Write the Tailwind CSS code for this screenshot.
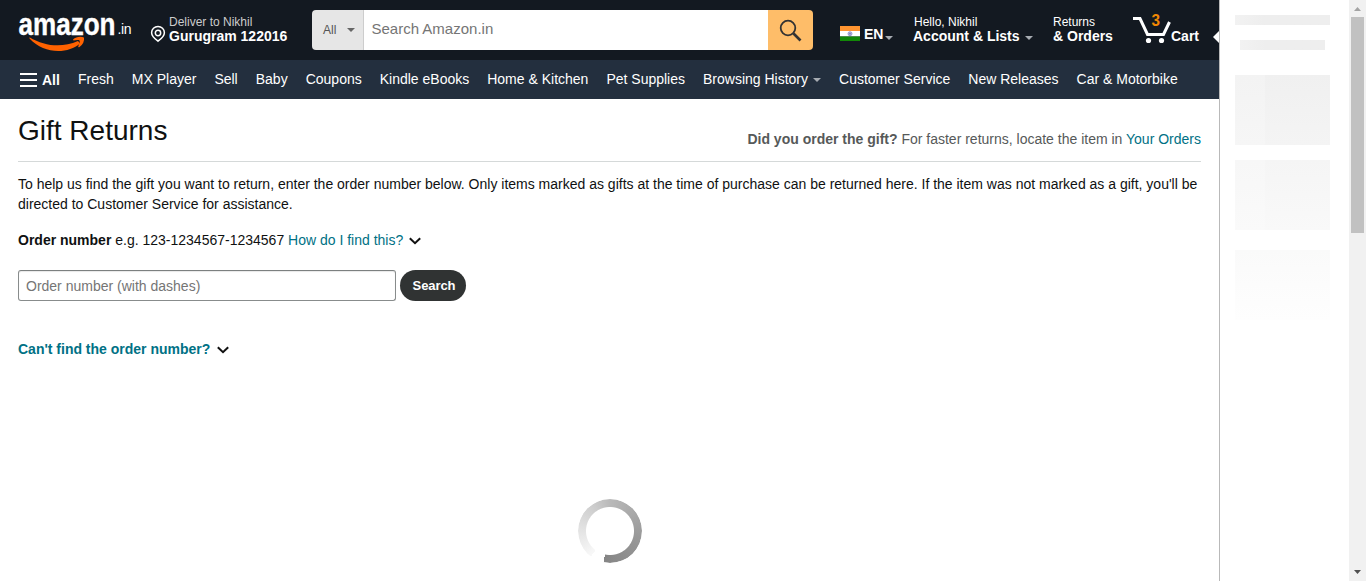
<!DOCTYPE html>
<html lang="en">
<head>
<meta charset="utf-8">
<title>Gift Returns</title>
<script src="https://cdn.jsdelivr.net/npm/@tailwindcss/browser@4"></script>
</head>
<body class="flex h-[581px] w-[1366px] overflow-hidden bg-white font-['Liberation_Sans',Arial,sans-serif] text-sm text-[#0f1111]">
<div class="relative flex w-[1219px] shrink-0 flex-col">
  <header class="flex h-[60px] shrink-0 bg-[#131921] text-white">
    <a class="block w-[150px] shrink-0">
      <svg width="150" height="60" viewBox="0 0 150 60">
        <text x="18.500" y="34.700" font-family="Liberation Sans, sans-serif" font-weight="700" font-size="31" textLength="97" lengthAdjust="spacingAndGlyphs" fill="#fff" stroke="#fff" stroke-width=".4">amazon</text>
        <text x="117.500" y="34" font-family="Liberation Sans, sans-serif" font-size="14" textLength="14" fill="#fff">.in</text>
        <path d="M29.500 37.200C45 46.500 62 48 78 41l2 2.500C68 54 44 54.500 29.500 38.500Z" fill="#ff6200"/>
        <path d="M73 39.500c3-3 8-3.500 11-2 .5 3.500-1 7-4.500 9.500-1 .600-1.500.2-1.200-.7 1.200-2.800 1.800-4.700 1.200-5.700-.8-1-3.500-.7-6-.2Z" fill="#ff6200"/>
      </svg>
    </a>
    <div class="flex w-[162px] shrink-0">
      <svg class="mt-[25px]" width="16" height="18" viewBox="0 0 16 18" fill="none" stroke="#fff" stroke-width="1.500"><path d="M8 16.200C4 13.200 1.600 10.800 1.600 7.700a6.400 6.200 0 0 1 12.800 0C14.400 10.800 12 13.200 8 16.200Z"/><circle cx="8" cy="8" r="2.700"/></svg>
      <div class="ml-[3px] mt-[15px] whitespace-nowrap">
        <div class="text-xs leading-[14px] text-[#ccc]">Deliver to Nikhil</div>
        <div class="text-sm font-bold leading-[15px]">Gurugram 122016</div>
      </div>
    </div>
    <div class="mt-2.5 flex h-10 w-[501px] shrink-0 overflow-hidden rounded">
      <div class="flex w-[52px] items-center border-r border-[#cdcdcd] bg-[#e6e6e6] pl-[11px] text-xs text-[#555]"><span class="w-6">All</span><svg width="8" height="4" viewBox="0 0 8 4"><path d="M0 0h8L4 4Z" fill="#666"/></svg></div>
      <div class="flex-1 bg-white pl-[7.500px] text-[15px] leading-[38px] text-[#757575]">Search Amazon.in</div>
      <div class="w-[45px] bg-[#febd69]"><svg width="45" height="40" viewBox="0 0 45 40" fill="none" stroke="#333"><circle cx="20" cy="18" r="7.300" stroke-width="1.800"/><path d="m25.500 23.500 7 7" stroke-width="2.600"/></svg></div>
    </div>
    <div class="ml-[27px] flex w-[73px] shrink-0">
      <svg class="mt-[26px]" width="20" height="15" viewBox="0 0 20 15"><path d="M0 0h20v5H0Z" fill="#ff9430"/><path d="M0 5h20v5.500H0Z" fill="#fff"/><path d="M0 10.500h20V15H0Z" fill="#128807"/><circle cx="10" cy="7.700" r="2" fill="#b9b9df" stroke="#8a8ac4" stroke-width=".8"/><circle cx="10" cy="7.700" r=".7" fill="#5d5da8"/></svg>
      <span class="ml-1 mt-[26px] w-[21px] font-bold leading-4">EN</span>
      <svg class="mt-9" width="8" height="4" viewBox="0 0 8 4"><path d="M0 0h8L4 4Z" fill="#a7acb2"/></svg>
    </div>
    <div class="w-[140px] shrink-0 whitespace-nowrap pt-[15px]">
      <div class="pl-px text-xs leading-[14px]">Hello, Nikhil</div>
      <div class="flex font-bold leading-[15px]"><span class="w-28">Account &amp; Lists</span><svg class="mt-[7px]" width="8" height="4" viewBox="0 0 8 4"><path d="M0 0h8L4 4Z" fill="#a7acb2"/></svg></div>
    </div>
    <div class="w-20 shrink-0 whitespace-nowrap pt-[15px]">
      <div class="text-xs leading-[14px]">Returns</div>
      <div class="font-bold leading-[15px]">&amp; Orders</div>
    </div>
    <div class="flex shrink-0">
      <svg width="38" height="60" viewBox="0 0 38 60"><path d="M0 18.500h7l7.500 16h16l6-12.500" fill="none" stroke="#fff" stroke-width="3"/><circle cx="15.500" cy="40.500" r="2.600" fill="#fff"/><circle cx="28.500" cy="40.500" r="2.600" fill="#fff"/><text x="18.500" y="26" font-family="Liberation Sans, sans-serif" font-size="17" font-weight="700" fill="#f08804" textLength="8.500" lengthAdjust="spacingAndGlyphs">3</text></svg>
      <span class="mt-7 font-bold leading-4">Cart</span>
    </div>
  </header>
  <svg class="absolute right-0 top-[31px]" width="6" height="12" viewBox="0 0 6 12"><path d="M6 0v12L0 6Z" fill="#fff"/></svg>
  <nav class="flex h-[39px] shrink-0 items-center gap-[18px] whitespace-nowrap bg-[#232f3e] pb-0.5 pl-5 text-white">
    <div class="flex w-10 items-center gap-[5px] font-bold"><svg width="17" height="14" viewBox="0 0 17 14" class="mt-0.5 shrink-0"><path d="M0 0h17v2H0ZM0 6h17v2H0ZM0 12h17v2H0Z" fill="#fff"/></svg><span class="pt-0.5">All</span></div>
    <span>Fresh</span><span>MX Player</span><span>Sell</span><span>Baby</span><span>Coupons</span><span>Kindle eBooks</span><span>Home &amp; Kitchen</span><span>Pet Supplies</span>
    <span class="flex items-center gap-[5px]">Browsing History<svg class="mt-0.5" width="8" height="4" viewBox="0 0 8 4"><path d="M0 0h8L4 4Z" fill="#a7acb2"/></svg></span>
    <span>Customer Service</span><span>New Releases</span><span>Car &amp; Motorbike</span>
  </nav>
  <main class="px-[18px] whitespace-nowrap">
    <div class="flex h-[63px] justify-between border-b border-[#d5d9d9]">
      <h1 class="pt-3.5 text-[28px] leading-9">Gift Returns</h1>
      <p class="pt-[30px] leading-5 text-[#565959]"><b>Did you order the gift?</b> For faster returns, locate the item in <a class="text-[#007185]">Your Orders</a></p>
    </div>
    <p class="mt-3 leading-5">To help us find the gift you want to return, enter the order number below. Only items marked as gifts at the time of purchase can be returned here. If the item was not marked as a gift, you'll be<br>directed to Customer Service for assistance.</p>
    <p class="mt-4 flex items-center leading-5"><span><b>Order number</b> e.g. 123-1234567-1234567 <a class="text-[#007185]">How do I find this?</a></span><svg class="ml-1.5 mt-0.5" width="12" height="8" viewBox="0 0 12 8" fill="none" stroke="#111" stroke-width="2"><path d="m.8 1.200 5.200 5 5.200-5"/></svg></p>
    <div class="mt-5 flex gap-1">
      <div class="h-[31px] w-[378px] rounded-[3px] border border-[#888c8c] border-t-[#7c8080] pl-[7px] leading-[30px] text-[#757575] shadow-[inset_0_1px_1px_#e8e8e8]">Order number (with dashes)</div>
      <div class="h-[31px] w-[66px] rounded-full bg-[#303333] pl-0.5 text-center text-[13px] font-bold leading-[31px] tracking-[-0.1px] text-white">Search</div>
    </div>
    <p class="mt-[38px] flex items-center font-bold leading-5 text-[#007185]">Can't find the order number?<svg class="ml-[7px] mt-0.5" width="12" height="8" viewBox="0 0 12 8" fill="none" stroke="#111" stroke-width="2"><path d="m.8 1.200 5.200 5 5.200-5"/></svg></p>
    <div class="ml-[560px] mt-[140px] size-16 rounded-full bg-[conic-gradient(#b9b9b9_0deg,#999_100deg,#858585_192deg,transparent_192deg,transparent_217deg,#f8f8f8_217deg,#e2e2e2_275deg,#cbcbcb_330deg,#b9b9b9_360deg)] [mask:radial-gradient(circle,transparent_23.500px,#000_24.500px)]"></div>
  </main>
</div>
<aside class="flex w-[130px] shrink-0 flex-col border-l border-[#b9b9b9] pl-[15px] pt-[15px]">
  <div class="h-2.5 w-[95px] bg-linear-to-r from-[#f2f2f2] to-[#eeeeee] to-30%"></div>
  <div class="ml-[5px] mt-[15px] h-2.5 w-[85px] bg-linear-to-r from-[#f2f2f2] to-[#eeeeee] to-30%"></div>
  <div class="mt-[25px] flex h-[70px] w-[95px]"><div class="w-[30px] bg-linear-to-b from-[#f3f3f3] to-[#f6f6f6]"></div><div class="flex-1 bg-linear-to-b from-[#f0f0f0] to-[#f4f4f4]"></div></div>
  <div class="mt-[15px] flex h-[70px] w-[95px]"><div class="w-[30px] bg-linear-to-b from-[#f7f7f7] to-[#fafafa]"></div><div class="flex-1 bg-linear-to-b from-[#f5f5f5] to-[#f9f9f9]"></div></div>
  <div class="mt-5 h-[70px] w-[95px] bg-linear-to-b from-[#fafafa] to-[#fefefe]"></div>
</aside>
<div class="flex w-[17px] shrink-0 flex-col items-center bg-[#f1f1f1]">
  <svg class="mt-[7px] shrink-0" width="7" height="4" viewBox="0 0 7 4"><path d="M0 4h7L3.500 0Z" fill="#a3a3a3"/></svg>
  <div class="mt-1.5 h-[216px] w-[13px] shrink-0 bg-[#c1c1c1]"></div>
  <svg class="mb-[7px] mt-auto shrink-0" width="7" height="4" viewBox="0 0 7 4"><path d="M0 0h7L3.500 4Z" fill="#505050"/></svg>
</div>
</body>
</html>
